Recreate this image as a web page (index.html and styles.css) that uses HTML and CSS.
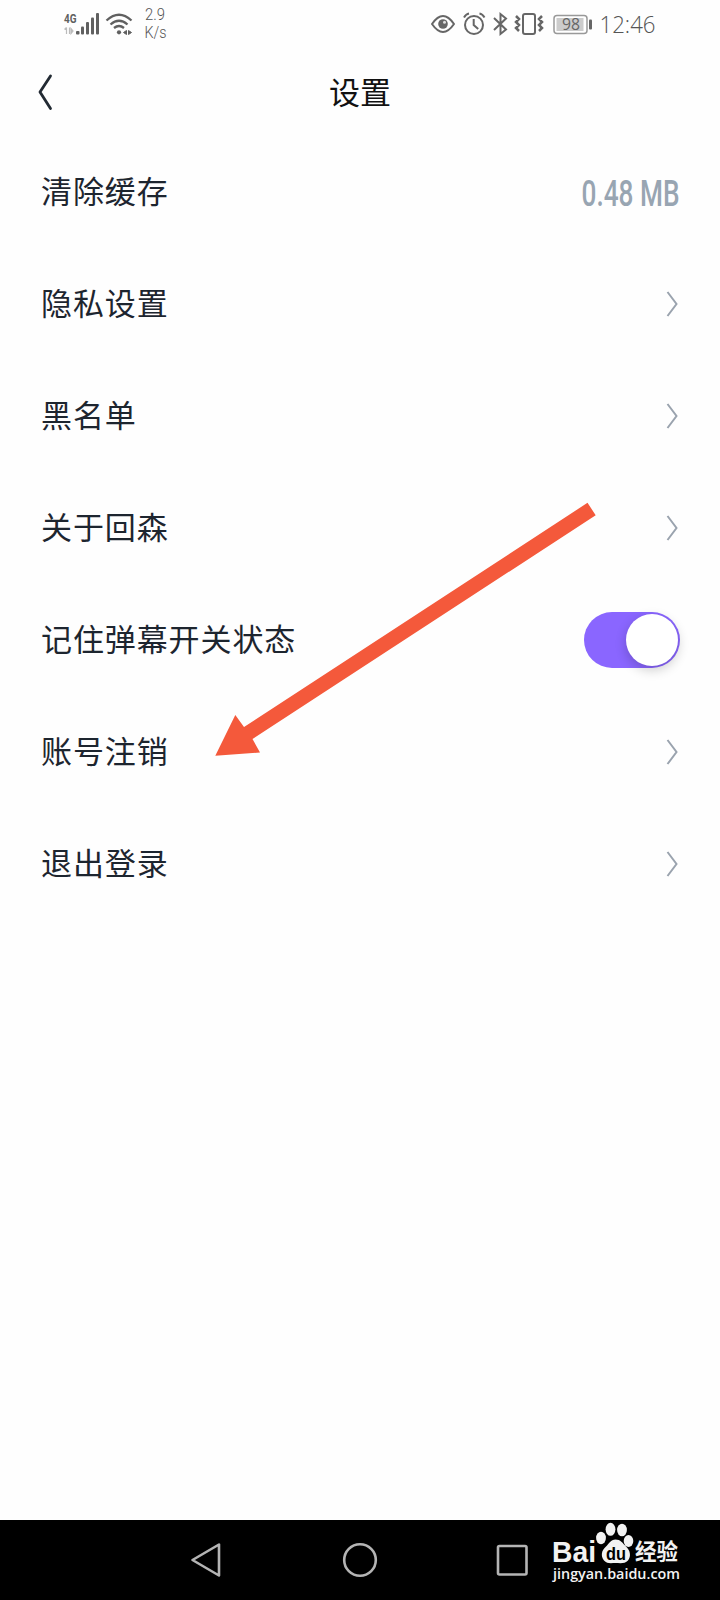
FILE: index.html
```html
<!DOCTYPE html>
<html lang="zh-CN">
<head>
    <meta charset="UTF-8">
    <meta name="viewport" content="width=device-width, initial-scale=1.0">
    <title>设置</title>
    <link rel="stylesheet" href="styles.css">
</head>
<body>
    <div class="status-bar">
        <svg class="status-left" width="180" height="48" viewBox="0 0 180 48">
            <text x="64" y="22.500" class="net-type" textLength="12.500" lengthAdjust="spacingAndGlyphs">4G</text>
            <path d="M66.500 27.500v6.500M64.500 29.500l2-2M69.500 27.500v6.500M71 28.500l2 2.500-2 2.500z" fill="#bbb" stroke="#bbb" stroke-width="1.200"/>
            <g fill="#606060">
                <rect x="76" y="31" width="3.500" height="3.500" rx="1"/>
                <rect x="81" y="26.500" width="3" height="8" rx="1"/>
                <rect x="86" y="22" width="3" height="12.500" rx="1"/>
                <rect x="91" y="17.500" width="3" height="17" rx="1"/>
                <rect x="96" y="13" width="3" height="21.500" rx="1"/>
            </g>
            <path d="M106.500 20.500q12.500-11.500 25 0M110.500 24.500q8.500-7.500 17 0M114 28q5-4 10 0" fill="none" stroke="#606060" stroke-width="2.300"/>
            <circle cx="119" cy="32.300" r="2.100" fill="#606060"/>
            <path d="M123.500 32.500l3-2v4zM131.500 32.500l-3-2v4z" fill="#606060" stroke="#606060"/>
            <text x="145" y="20" class="speed" textLength="20" lengthAdjust="spacingAndGlyphs">2.9</text>
            <text x="144.500" y="38" class="speed" textLength="22" lengthAdjust="spacingAndGlyphs">K/s</text>
        </svg>
        <svg class="status-right" width="240" height="48" viewBox="425 0 240 48">
            <g fill="none" stroke="#666" stroke-width="2">
                <!-- eye -->
                <path d="M432 24q11-16 22 0q-11 16-22 0z" stroke-linejoin="round"/>
                <circle cx="443" cy="24" r="4.800" fill="#666" stroke="none"/>
                <circle cx="444.500" cy="22.300" r="1.500" fill="#ddd" stroke="none"/>
                <!-- alarm -->
                <circle cx="474" cy="25" r="9"/>
                <path d="M473.700 19v6l4.500 4M464 17.500q2-3.500 5-4M479.500 13.500q3 .5 5 4"/>
                <!-- bluetooth -->
                <path d="M494 18l12 11.500-5.500 4.500V14l5.500 4.500L494 30"/>
                <!-- vibrate -->
                <rect x="523" y="14" width="12" height="20" rx="2"/>
                <path d="M516 16l3 3-3 3 3 3-3 3 3 3M542 16l-3 3 3 3-3 3 3 3-3 3" stroke-width="2.500"/>
            </g>
            <rect x="554" y="15.500" width="33" height="18" rx="3" fill="#fff" stroke="#999" stroke-width="1.500"/>
            <rect x="556.500" y="18" width="27" height="13" fill="#ccc"/>
            <rect x="589" y="19.500" width="3" height="10" rx="1" fill="#666"/>
            <text x="562" y="30" class="battery" textLength="18" lengthAdjust="spacingAndGlyphs">98</text>
            <text x="599.500" y="33" class="clock" textLength="56" lengthAdjust="spacingAndGlyphs">12:46</text>
        </svg>
    </div>

    <header class="title-bar">
        <svg class="back" width="16" height="40" viewBox="0 0 16 40">
            <path d="M12.500 4L2 20l10.500 16.500" fill="none" stroke="#222a33" stroke-width="2.800" stroke-linecap="round" stroke-linejoin="round"/>
        </svg>
        <h1>设置</h1>
    </header>

    <main class="list">
        <div class="row">
            <span>清除缓存</span>
            <svg class="size" width="100" height="48" viewBox="0 0 100 48">
                <text x="1.500" y="38" textLength="98" lengthAdjust="spacingAndGlyphs">0.48 MB</text>
            </svg>
        </div>
        <div class="row">
            <span>隐私设置</span>
            <svg class="chevron" viewBox="0 0 12 28"><path d="M1.500 2l9 12-9 12"/></svg>
        </div>
        <div class="row">
            <span>黑名单</span>
            <svg class="chevron" viewBox="0 0 12 28"><path d="M1.500 2l9 12-9 12"/></svg>
        </div>
        <div class="row">
            <span>关于回森</span>
            <svg class="chevron" viewBox="0 0 12 28"><path d="M1.500 2l9 12-9 12"/></svg>
        </div>
        <div class="row">
            <span>记住弹幕开关状态</span>
            <div class="switch"><div class="knob"></div></div>
        </div>
        <div class="row">
            <span>账号注销</span>
            <svg class="chevron" viewBox="0 0 12 28"><path d="M1.500 2l9 12-9 12"/></svg>
        </div>
        <div class="row">
            <span>退出登录</span>
            <svg class="chevron" viewBox="0 0 12 28"><path d="M1.500 2l9 12-9 12"/></svg>
        </div>
    </main>

    <!-- arrow pointing at 账号注销 -->
    <svg class="arrow" width="400" height="270" viewBox="205 495 400 270">
        <path d="M215.300 755.700L235.300 715l8.700 12L587.500 502.800l8.200 12.400L252.500 739l7.500 13.500z" fill="#f4593b"/>
    </svg>

    <nav class="nav-bar">
        <svg class="nav-keys" width="720" height="80" viewBox="0 0 720 80">
            <g fill="none" stroke="#b4b4b4" stroke-width="2.600" stroke-linejoin="round">
                <path d="M192.500 40L219 24.500v31z"/>
                <circle cx="360" cy="40" r="15.800"/>
                <rect x="498" y="26" width="28.500" height="28.500" rx="1.500"/>
            </g>
        </svg>
        <svg class="watermark" width="140" height="80" viewBox="545 1520 140 80">
            <g fill="#f2f2f2">
                <ellipse cx="601" cy="1538" rx="4.900" ry="6.200"/>
                <ellipse cx="610.500" cy="1529.300" rx="4.900" ry="6.500"/>
                <ellipse cx="622" cy="1530" rx="4.900" ry="6.300"/>
                <ellipse cx="628.500" cy="1541" rx="4.800" ry="6"/>
                <path d="M615.500 1539.500c-5 0-6 4-10 7.500-4 3.500-5 9-1.500 13.500 3 3.500 7 2.500 11.500 2.500s9.500 1 12.500-2.500c3.500-4.500 2-10-1.500-13.500-4-4-6-7.500-11-7.500z"/>
                <text x="552" y="1562" class="bai" textLength="44" lengthAdjust="spacingAndGlyphs">Bai</text>
                <text x="635" y="1560" class="jingyan" textLength="43" lengthAdjust="spacingAndGlyphs">经验</text>
                <text x="553" y="1579" class="url" textLength="127" lengthAdjust="spacingAndGlyphs">jingyan.baidu.com</text>
            </g>
            <text x="606" y="1559.500" class="du" textLength="20" lengthAdjust="spacingAndGlyphs">du</text>
        </svg>
    </nav>
</body>
</html>
```
FILE: styles.css
```css
* {
    box-sizing: border-box;
}

body {
    margin: 0;
    width: 720px;
    height: 1600px;
    display: flex;
    flex-direction: column;
    position: relative;
    overflow: hidden;
    background: #fefefe;
    font-family: "Noto Sans CJK SC", sans-serif;
}

svg {
    display: block;
    overflow: visible;
}

.status-bar {
    height: 48px;
    display: flex;
    justify-content: space-between;
    padding-right: 55px;
}

.net-type {
    font: bold 12px Roboto, sans-serif;
    fill: #606060;
}

.speed {
    font: 300 16px Roboto, sans-serif;
    fill: #555;
}

.battery {
    font: 16px "Open Sans", sans-serif;
    fill: #666;
}

.clock {
    font: 300 24px "Open Sans", sans-serif;
    fill: #555;
}

.title-bar {
    height: 88px;
    display: grid;
    grid-template-columns: 1fr auto 1fr;
    align-items: center;
    padding: 0 38px;
}

.title-bar h1 {
    grid-column: 2;
    margin: 0;
    padding-bottom: 3px;
    font-size: 31px;
    font-weight: 400;
    line-height: 48px;
    color: #111;
}

.list {
    flex: 1;
    padding: 0 40px;
}

.row {
    height: 112px;
    display: flex;
    align-items: center;
    justify-content: space-between;
    font-size: 31px;
    line-height: 48px;
    letter-spacing: 0.9px;
    color: #1d252f;
}

.row span {
    padding: 0 0 4px 1px;
}

.size text {
    font: 500 36px Roboto, sans-serif;
    letter-spacing: 0;
    fill: #98a5b2;
}

.chevron {
    width: 12px;
    height: 28px;
    margin-right: 2px;
    fill: none;
    stroke: #9aa3ae;
    stroke-width: 2;
}

.switch {
    width: 96px;
    height: 56px;
    padding: 2px;
    border-radius: 28px;
    background: #8a66ff;
    display: flex;
    justify-content: flex-end;
}

.knob {
    width: 52px;
    height: 52px;
    border-radius: 50%;
    background: #fff;
    box-shadow: 0 4px 12px rgba(0, 0, 0, 0.2);
}

.arrow {
    position: absolute;
    left: 205px;
    top: 495px;
}

.nav-bar {
    height: 80px;
    position: relative;
    background: #000;
}

/* sits on top of the navigation keys */
.watermark {
    position: absolute;
    left: 545px;
    top: 0;
}

.bai {
    font: bold 29px "Liberation Sans", sans-serif;
}

.du {
    font: bold 18px "Liberation Sans", sans-serif;
    fill: #000;
}

.jingyan {
    font: bold 23px "Noto Sans CJK SC", sans-serif;
}

.url {
    font: 600 15px "Open Sans", sans-serif;
}
```
